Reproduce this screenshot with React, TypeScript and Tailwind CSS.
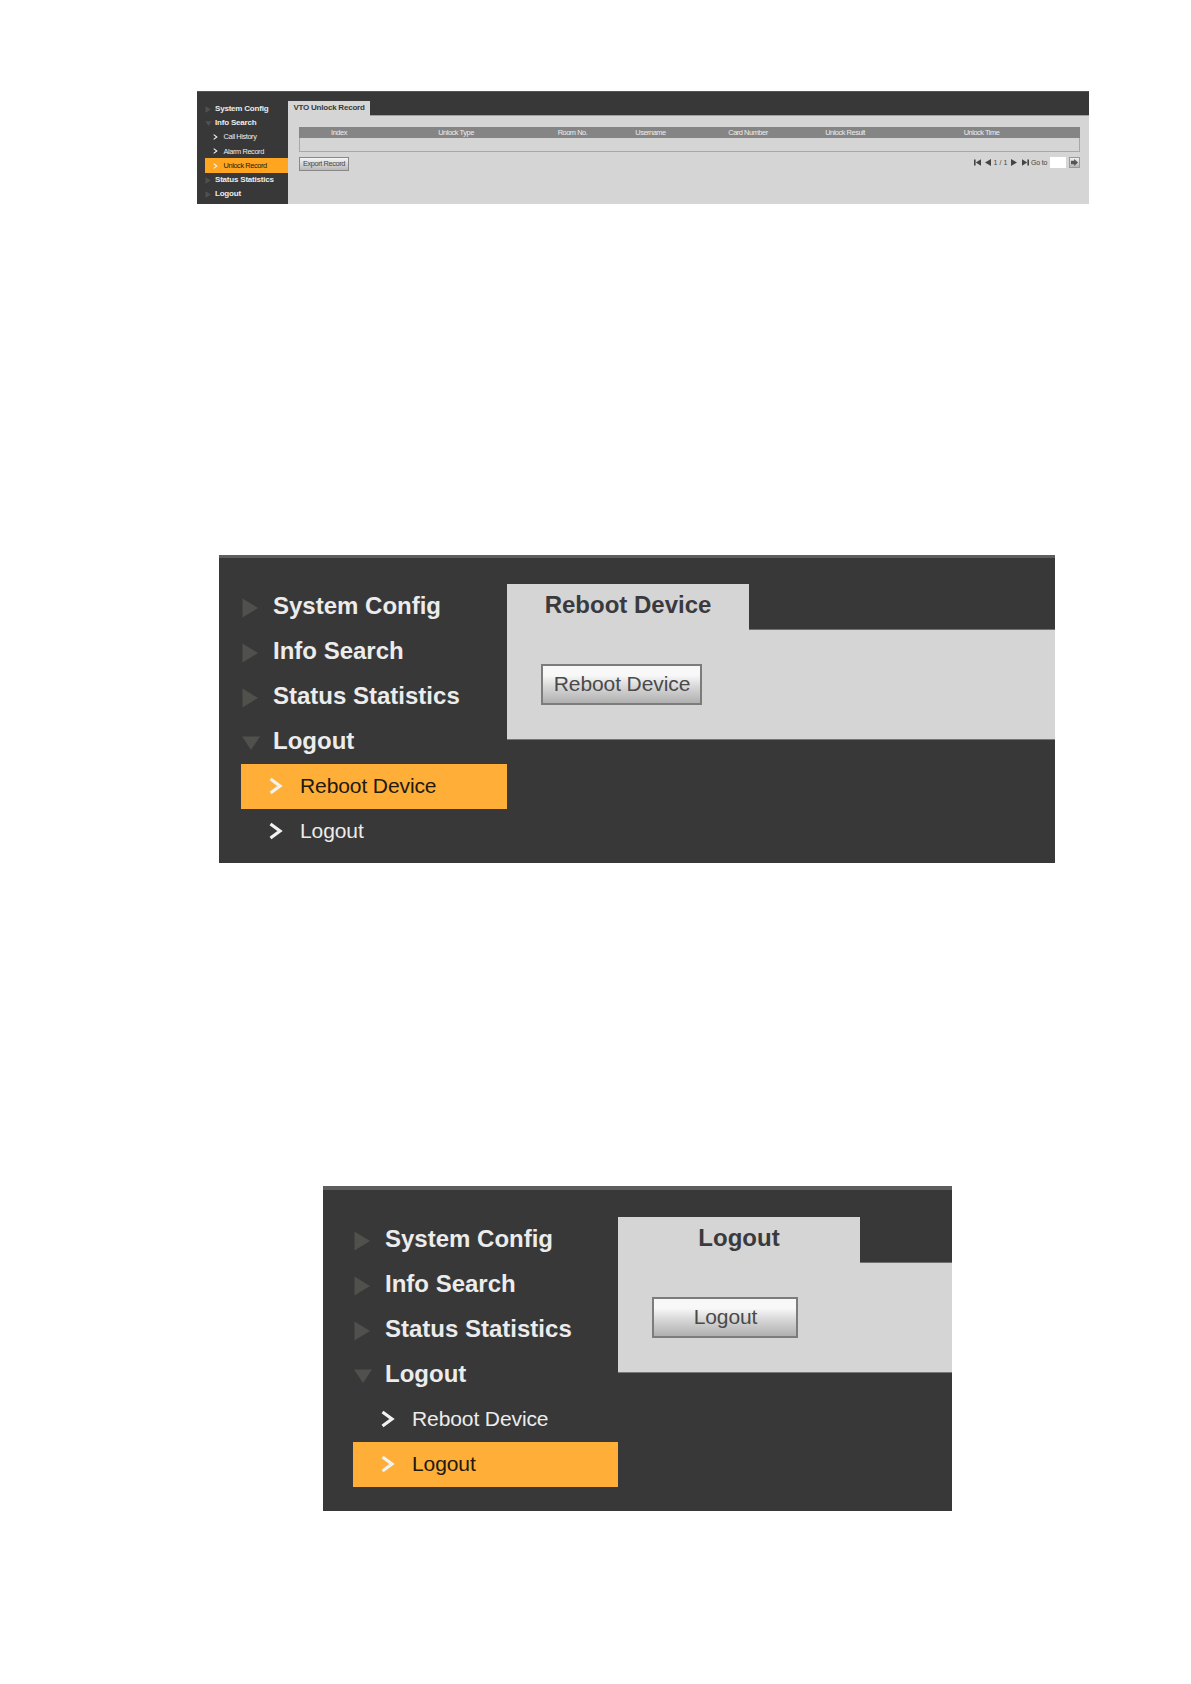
type Row = { label: string; kind: 'closed' | 'open' | 'sub'; active?: boolean };

function Triangle({ open, small }: { open: boolean; small?: boolean }) {
  return (
    <svg
      viewBox="0 0 20 20"
      className={small ? 'mt-px size-[7px] shrink-0' : 'mt-[3px] size-5 shrink-0'}
      fill={small ? '#50504e' : '#50504d'}
    >
      {open ? <path d="M1 3.5H19L10 17Z" /> : <path d="M1.5 0.5L17 10L1.5 19.5Z" />}
    </svg>
  );
}

function Chevron({ small }: { small?: boolean }) {
  return (
    <svg viewBox="0 0 14 18" className={small ? 'h-[6px] w-[5px] shrink-0' : '-mt-px h-[18px] w-[14px] shrink-0'} fill="none">
      <path d="M1.5 2L11 9L1.5 16" stroke="#f2f2f2" strokeWidth="3.2" />
    </svg>
  );
}

function Menu({ rows }: { rows: Row[] }) {
  return (
    <nav className="flex flex-col text-[#ececec]">
      {rows.map((r, i) =>
        r.kind === 'sub' ? (
          <div
            key={i}
            className={
              r.active
                ? 'flex h-[45px] items-center bg-[#ffae38] pl-7 text-[21px] text-[#201a10]'
                : 'flex h-[45px] items-center pl-7 text-[21px]'
            }
          >
            <Chevron />
            <span className="-mt-[2px] ml-[17px] whitespace-nowrap tracking-[-0.1px]">{r.label}</span>
          </div>
        ) : (
          <div key={i} className="flex h-[45px] items-center text-[24px] font-bold">
            <Triangle open={r.kind === 'open'} />
            <span className="-mt-px ml-3 whitespace-nowrap">{r.label}</span>
          </div>
        ),
      )}
    </nav>
  );
}

function SmallMenu() {
  const rows: Row[] = [
    { label: 'System Config', kind: 'closed' },
    { label: 'Info Search', kind: 'open' },
    { label: 'Call History', kind: 'sub' },
    { label: 'Alarm Record', kind: 'sub' },
    { label: 'Unlock Record', kind: 'sub', active: true },
    { label: 'Status Statistics', kind: 'closed' },
    { label: 'Logout', kind: 'closed' },
  ];
  return (
    <nav className="ml-2 flex w-[83px] flex-col pt-[9.4px] leading-none text-[#ececec]">
      {rows.map((r) =>
        r.kind === 'sub' ? (
          <div
            key={r.label}
            className={
              r.active
                ? 'flex h-[14.25px] items-center bg-[#ffa51f] pl-[8px] text-[7.4px] tracking-[-0.4px] text-[#201a10]'
                : 'flex h-[14.25px] items-center pl-[8px] text-[7.4px] tracking-[-0.4px]'
            }
          >
            <Chevron small />
            <span className="ml-[5.5px] whitespace-nowrap">{r.label}</span>
          </div>
        ) : (
          <div key={r.label} className="flex h-[14.25px] items-center text-[8px] font-bold tracking-[-0.2px]">
            <Triangle open={r.kind === 'open'} small />
            <span className="ml-[3px] whitespace-nowrap">{r.label}</span>
          </div>
        ),
      )}
    </nav>
  );
}

function Pager() {
  return (
    <div className="flex h-[11px] items-center text-[7px] leading-none text-[#444]">
      <svg viewBox="0 0 7 7" className="size-[7px]" fill="#444">
        <path d="M0 .5H1.6V6.5H0ZM7 .3V6.7L1.8 3.5Z" />
      </svg>
      <svg viewBox="0 0 6 7" className="ml-[4px] h-[7px] w-[6px]" fill="#444">
        <path d="M6 0V7L0 3.5Z" />
      </svg>
      <span className="ml-[2px] w-[15px] whitespace-nowrap text-center tracking-[0.1px]">1 / 1</span>
      <svg viewBox="0 0 6 7" className="ml-[3px] h-[7px] w-[6px]" fill="#444">
        <path d="M0 0V7L6 3.5Z" />
      </svg>
      <svg viewBox="0 0 7 7" className="ml-[5px] size-[7px]" fill="#444">
        <path d="M7 .5H5.4V6.5H7ZM0 .3V6.7L5.2 3.5Z" />
      </svg>
      <span className="ml-[2px] w-[17px] whitespace-nowrap tracking-[-0.2px]">Go to</span>
      <span className="ml-[2px] h-[11px] w-[16px] bg-white" />
      <span className="ml-[3px] flex size-[11px] items-center justify-center border border-[#999] bg-linear-to-b from-[#f0f0f0] to-[#b5b5b5]">
        <svg viewBox="0 0 8 8" className="size-[7px] shrink-0" fill="#555">
          <path d="M0 2H3.6V0L8 4L3.6 8V6H0Z" />
        </svg>
      </span>
    </div>
  );
}

function UnlockRecord() {
  return (
    <section className="ml-[197px] flex h-[113px] w-[892px] border-t border-[#555] bg-[#383838]">
      <SmallMenu />
      <div className="flex flex-1 flex-col pt-[9px]">
        <div className="flex h-[14px] w-[82px] items-center justify-center whitespace-nowrap bg-[#d5d5d5] text-[8px] font-bold leading-none tracking-[-0.22px] text-[#3a3a3a]">
          VTO Unlock Record
        </div>
        <div className="flex-1 bg-[#d5d5d5]">
          <div className="ml-[82px] h-px bg-[#a0a0a0]" />
          <div className="pl-[11px] pr-[9px] pt-[11px]">
            <div className="h-[25px] border border-t-0 border-[#a8a8a8]">
              <div className="-mx-px grid h-[11px] grid-cols-[80px_154px_79px_77px_118px_76px_197px] items-center bg-[#858585] text-center text-[7.4px] leading-none tracking-[-0.45px] text-[#eee]">
                <span>Index</span>
                <span>Unlock Type</span>
                <span>Room No.</span>
                <span>Username</span>
                <span>Card Number</span>
                <span>Unlock Result</span>
                <span>Unlock Time</span>
              </div>
            </div>
            <div className="mt-[5px] flex items-start justify-between">
              <button className="h-[14px] w-[50px] whitespace-nowrap border border-[#888] bg-linear-to-b from-[#f5f5f5] to-[#b8b8b8] text-[7.4px] leading-none tracking-[-0.4px] text-[#444]">
                Export Record
              </button>
              <Pager />
            </div>
          </div>
        </div>
      </div>
    </section>
  );
}

function Workspace({ title, button }: { title: string; button: React.ReactNode }) {
  return (
    <div className="flex flex-1 flex-col">
      <div className="h-[45px] w-[242px] bg-[#d5d5d5] text-center text-[24px] font-bold leading-[41px] text-[#3a3a3e]">
        {title}
      </div>
      <div className="flex h-[111px] border-b border-[#777] bg-[#d5d5d5]">
        <div className="h-px w-[242px]" />
        <div className="h-px flex-1 bg-[#707070]" />
      </div>
      <div className="-mt-[76px] ml-[34px]">{button}</div>
    </div>
  );
}

const buttonFace =
  'block h-[41px] border-2 border-[#7c7c7c] bg-linear-to-b from-[#f8f8f8] from-25% via-[#d8d8d8] via-55% to-[#b0b0b0] pb-[2px] pl-px text-[21px] leading-[35px] tracking-[-0.1px] text-[#4a4a4a] whitespace-nowrap';

const groups: Row[] = [
  { label: 'System Config', kind: 'closed' },
  { label: 'Info Search', kind: 'closed' },
  { label: 'Status Statistics', kind: 'closed' },
  { label: 'Logout', kind: 'open' },
];

export default function App() {
  return (
    <main className="h-[1684px] w-[1191px] overflow-hidden bg-white pt-[91px] font-['Liberation_Sans',Arial,sans-serif]">
      <UnlockRecord />

      <section className="ml-[219px] mt-[351px] flex h-[308px] w-[836px] border-t-[3px] border-[#5e5e5e] bg-[#383838] pt-[26px]">
        <div className="ml-[22px] w-[266px]">
          <Menu
            rows={[
              ...groups,
              { label: 'Reboot Device', kind: 'sub', active: true },
              { label: 'Logout', kind: 'sub' },
            ]}
          />
        </div>
        <Workspace title="Reboot Device" button={<button className={`${buttonFace} w-[161px]`}>Reboot Device</button>} />
      </section>

      <section className="ml-[323px] mt-[323px] flex h-[325px] w-[629px] border-t-[4px] border-[#5e5e5e] bg-[#383838] pt-[27px]">
        <div className="ml-[30px] w-[265px]">
          <Menu
            rows={[
              ...groups,
              { label: 'Reboot Device', kind: 'sub' },
              { label: 'Logout', kind: 'sub', active: true },
            ]}
          />
        </div>
        <Workspace title="Logout" button={<button className={`${buttonFace} w-[146px]`}>Logout</button>} />
      </section>
    </main>
  );
}
